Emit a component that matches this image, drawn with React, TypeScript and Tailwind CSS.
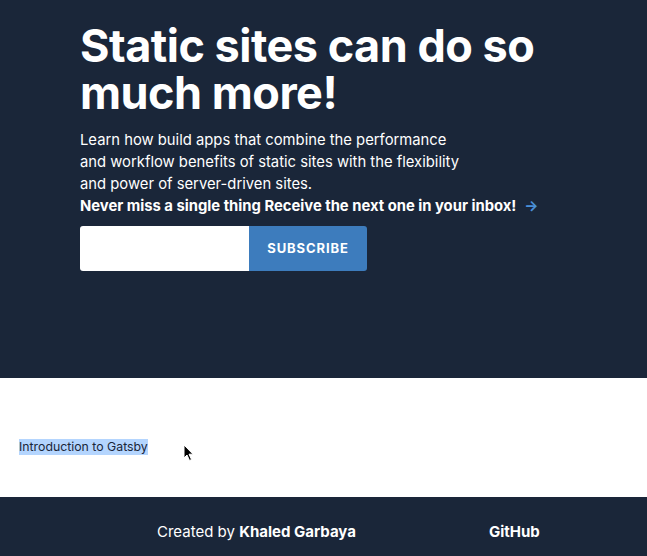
export default function App() {
  return (
    <div className="min-h-screen flex flex-col bg-white font-['Inter',sans-serif]">
      <header className="h-[378px] bg-[#1a2639] px-[80px] pt-[22px]">
        <h1 className="text-[45px] leading-[47px] font-bold text-white tracking-[-0.5px] max-w-[490px]">
          Static sites can do so much more!
        </h1>
        <p className="mt-[13px] text-[14.8px] leading-[22px] text-white">
          Learn how build apps that combine the performance
          <br />
          and workflow benefits of static sites with the flexibility
          <br />
          and power of server-driven sites.
        </p>
        <p className="text-[14.8px] leading-[22px] font-bold text-white flex items-center gap-[8px]">
          Never miss a single thing Receive the next one in your inbox!
          <span className="text-[#4a90d9] font-bold">→</span>
        </p>
        <form className="mt-[9px] flex h-[45px] w-[287px]">
          <input
            type="text"
            className="w-[169px] h-full bg-white rounded-l-[3px] outline-none"
          />
          <button
            type="button"
            className="flex-1 h-full bg-[#3d7cbd] rounded-r-[3px] text-white text-[13px] font-bold tracking-[0.9px]"
          >
            SUBSCRIBE
          </button>
        </form>
      </header>
      <main className="h-[119px] flex items-center px-[19px] pt-[19px] relative">
        <span className="text-[12.3px] text-[#1a2639] bg-[#b4d5fe] leading-[16px]">
          Introduction to Gatsby
        </span>
        <svg
          className="absolute left-[183px] top-[66px]"
          width="12"
          height="18"
          viewBox="0 0 12 18"
        >
          <path
            d="M1 1 L1 14 L4 11 L6.5 16.5 L8.5 15.5 L6 10.2 L10 10.2 Z"
            fill="#000"
            stroke="#fff"
            strokeWidth="1"
          />
        </svg>
      </main>
      <footer className="flex-1 bg-[#1a2639] flex items-center text-white text-[15px] pl-[157px] pt-[12px]">
        <span>
          Created by <b>Khaled Garbaya</b>
        </span>
        <b className="ml-[133px]">GitHub</b>
      </footer>
    </div>
  );
}
